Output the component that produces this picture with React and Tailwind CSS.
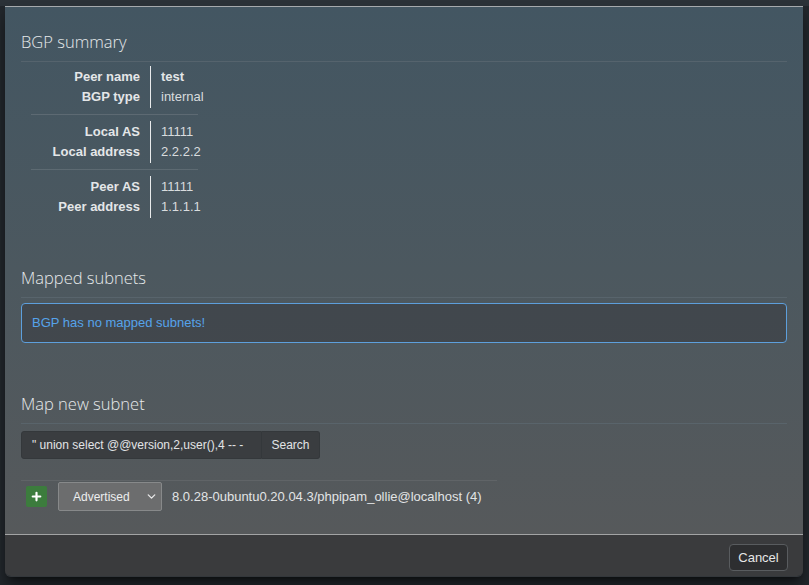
import { ChevronDown, Plus } from "lucide-react";

const groups = [
  [
    { label: "Peer name", value: "test", bold: true },
    { label: "BGP type", value: "internal" },
  ],
  [
    { label: "Local AS", value: "11111" },
    { label: "Local address", value: "2.2.2.2" },
  ],
  [
    { label: "Peer AS", value: "11111" },
    { label: "Peer address", value: "1.1.1.1" },
  ],
];

function Heading({ children }) {
  return (
    <h4
      className="border-b border-[#5d6a72]/70 pb-[9px] text-[16.5px] font-light leading-[20px] text-[#e6e9eb]"
      style={{ fontFamily: '"Open Sans", sans-serif' }}
    >
      {children}
    </h4>
  );
}

export default function App() {
  return (
    <div
      className="flex h-[585px] w-[809px] flex-col overflow-hidden bg-[#21262b] text-[13px] text-[#e4e6e8]"
      style={{ fontFamily: '"Liberation Sans", Arial, sans-serif' }}
    >
      <div className="h-[6px] shrink-0 bg-[#2b3238]" />
      <div className="mx-[5px] flex h-[571px] w-[798px] flex-col overflow-hidden rounded-b-[6px] border-b border-[#33373b] shadow-lg shadow-black/50">
        <div className="h-[1px] bg-[#a6aaad]" />
        <div className="flex h-[527px] flex-col bg-linear-to-b from-[#435662] via-[#4c585f] to-[#56595b] px-4 pt-[25px]">
          <Heading>BGP summary</Heading>

          <div className="mt-[4px] ml-[10px] w-[167px]">
            {groups.map((g, i) => (
              <div key={i}>
                {i > 0 && <div className="my-[6px] h-px bg-[#66727a]/70" />}
                <div className="flex">
                  <div className="w-[119px] shrink-0 py-[0.5px] pr-[10px] text-right font-bold">
                    {g.map((r) => (
                      <div key={r.label} className="h-[20.5px] whitespace-nowrap leading-[20.5px]">{r.label}</div>
                    ))}
                  </div>
                  <div className="shrink-0 border-l border-[#e8eaeb] py-[0.5px] pl-[10px]">
                    {g.map((r) => (
                      <div key={r.label} className={`h-[20.5px] whitespace-nowrap leading-[20.5px] ${r.bold ? "font-bold" : "text-[#d8dcde]"}`}>
                        {r.value}
                      </div>
                    ))}
                  </div>
                </div>
              </div>
            ))}
          </div>

          <div className="mt-[50px]">
            <Heading>Mapped subnets</Heading>
          </div>
          <div className="mt-[5px] flex h-[40px] items-center rounded-[4px] border border-[#5d9fdc] bg-[#3e4448]/80 px-[10px] text-[#56a3ea]">
            BGP has no mapped subnets!
          </div>

          <div className="mt-[51px]">
            <Heading>Map new subnet</Heading>
          </div>
          <div className="mt-[7px] flex h-[28px] w-[299px] text-[12px]">
            <div className="flex w-[241px] items-center rounded-l-[3px] border border-[#34383b] bg-[#3a3d40] pl-[10px] text-[#e2e4e6]">
              " union select @@version,2,user(),4 -- -
            </div>
            <div className="flex flex-1 items-center justify-center rounded-r-[3px] border border-l-0 border-[#34383b] bg-[#3a3d40] text-[#e2e4e6]">
              Search
            </div>
          </div>

          <div className="mt-[21px] w-[476px] border-t border-[#65696c]/70">
            <div className="flex h-[31px] items-center">
              <div className="ml-[5px] flex h-[21px] w-[21px] items-center justify-center rounded-[2px] bg-[#3c7c3d]">
                <Plus size={13} strokeWidth={4} className="text-white" />
              </div>
              <div className="ml-[11px] flex h-[29px] w-[104px] items-center rounded-[2px] border border-[#87898a] bg-[#6c6d6e] pl-[14px] pr-[3px] text-[12px] text-[#eceeef]">
                <span className="flex-1">Advertised</span>
                <ChevronDown size={13} strokeWidth={2.5} className="text-[#e8e8e8]" />
              </div>
              <span className="ml-[10px] text-[13px] text-[#e2e4e5]">
                8.0.28-0ubuntu0.20.04.3/phpipam_ollie@localhost (4)
              </span>
            </div>
          </div>
        </div>
        <div className="h-[1px] bg-[#a3a4a5]" />
        <div className="flex flex-1 items-start justify-end bg-[#3a3b3d] pr-[15px] pt-[9px]">
          <button className="flex h-[27px] w-[59px] items-center justify-center rounded-[4px] border border-[#595c5f] bg-[#2d2e30] text-[13px] text-[#e6e6e6]">
            Cancel
          </button>
        </div>
      </div>
    </div>
  );
}
